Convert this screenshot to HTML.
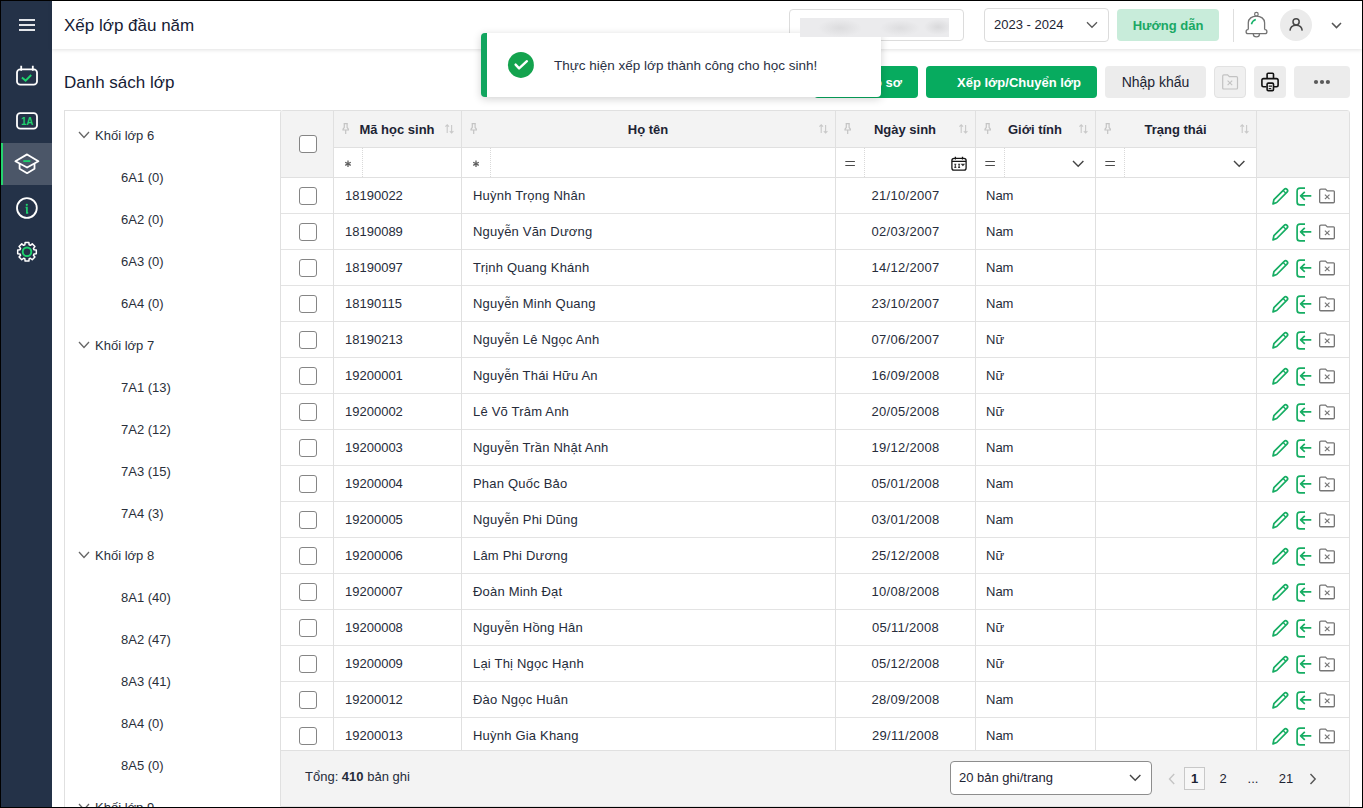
<!DOCTYPE html>
<html><head><meta charset="utf-8">
<style>
*{box-sizing:border-box;margin:0;padding:0}
html,body{width:1363px;height:808px;overflow:hidden;background:#000}
body{font-family:"Liberation Sans",sans-serif;color:#1d2433;position:relative}
#app{position:absolute;left:1px;top:1px;width:1361px;height:806px;background:#fff;overflow:hidden}
.abs{position:absolute}
svg{position:absolute;overflow:visible}
#side{position:absolute;left:0;top:0;width:51px;height:806px;background:#243248}
#hdr{position:absolute;left:51px;top:0;width:1310px;height:48px;background:#fff;box-shadow:0 1px 4px rgba(0,0,0,0.12);z-index:2}
.title{position:absolute;font-size:17px;color:#162035;white-space:nowrap}
.btn{position:absolute;top:65px;height:32px;border-radius:4px;font-size:13px;line-height:32px;text-align:center;white-space:nowrap}
.green{background:#07ab5f;color:#fff;font-weight:700;text-align:right;padding-right:16px}
.gray{background:#ececec;color:#1d2433}
#tree{position:absolute;left:63px;top:109px;width:217px;height:720px;border:1px solid #e0e0e0;border-right:none;background:#fff}
.tg{position:absolute;left:30px;font-size:13px;line-height:20px;color:#2a2f3a;white-space:nowrap}
.tg .chev{position:absolute;left:-17px;top:5px}
.tc{position:absolute;left:56px;font-size:13px;line-height:20px;color:#2a2f3a;white-space:nowrap}
#tbl{position:absolute;left:279px;top:109px;width:1070px;height:697px;border:1px solid #e0e0e0;border-radius:3px 3px 0 0;background:#fff;overflow:hidden}
.hd{position:absolute;background:#f3f3f3}
.row{position:absolute;left:0;width:1068px;height:36px;border-bottom:1px solid #e3e3e3;font-size:13px;line-height:36px;color:#262c3a}
.row span{position:absolute;white-space:nowrap}
.cb{position:absolute;width:18px;height:18px;border:1.5px solid #858585;border-radius:3px;background:#fff}
.row .cb{left:18px}
.c1{left:64px}.c2{left:192px;letter-spacing:0.2px}.c3{left:555px;width:139px;text-align:center;letter-spacing:0.3px}.c4{left:705px}
.ic{position:absolute;top:9px}
.vl{position:absolute;width:1px;background:#e0e0e0;top:0;height:639px;z-index:1}
.dl{position:absolute;width:0;border-left:1px dotted #d9d9d9;top:37px;height:29px}
.hdt{position:absolute;top:0;font-size:13px;font-weight:700;color:#1d2433;line-height:37px;white-space:nowrap;text-align:center}
.flt{position:absolute;top:37px;line-height:29px;font-size:13px;color:#666;font-weight:700}
#foot{position:absolute;left:0;top:639px;width:1068px;height:57px;background:#f3f3f3;border-top:1px solid #e0e0e0}
#toast{position:absolute;left:480px;top:32px;width:400px;height:64px;background:#fff;border-radius:4px;box-shadow:0 2px 8px rgba(0,0,0,0.18);z-index:5;border-left:6px solid #12a55f}
</style></head><body><div id="app">
<div id="side">
  <div class="abs" style="left:18px;top:18px;width:16px;height:2px;background:#e3e6ea"></div>
  <div class="abs" style="left:18px;top:23px;width:16px;height:2px;background:#e3e6ea"></div>
  <div class="abs" style="left:18px;top:28px;width:16px;height:2px;background:#e3e6ea"></div>
  <!-- calendar check -->
  <svg style="left:0;top:0" width="51" height="300">
    <rect x="16" y="68.3" width="20" height="15.4" rx="3.3" fill="none" stroke="#fff" stroke-width="1.8"/>
    <path d="M20.2 64.8 V69.8 M31.8 64.8 V69.8" stroke="#fff" stroke-width="1.8"/>
    <path d="M20.9 76.6 L24.6 79.6 L30.2 74" fill="none" stroke="#1ed36e" stroke-width="1.9"/>
    <rect x="16" y="112.2" width="20" height="15.5" rx="3.3" fill="none" stroke="#fff" stroke-width="1.8"/>
    <text x="20.2" y="124.2" textLength="12.2" lengthAdjust="spacingAndGlyphs" font-family="Liberation Sans" font-weight="700" font-size="11.6" fill="#1ed36e">1A</text>
  </svg>
  <div class="abs" style="left:0;top:142px;width:51px;height:42px;background:#4b5668"></div>
  <div class="abs" style="left:0;top:142px;width:2px;height:42px;background:#25d46f"></div>
  <svg style="left:0;top:0" width="51" height="300">
    <path d="M14.4 160.3 L26.1 153.4 L37.4 160.3 L26.1 166.5 Z" fill="none" stroke="#fff" stroke-width="1.8" stroke-linejoin="round"/>
    <path d="M18.6 162.4 V167.8 L26.1 172.2 L33.5 167.8 V162.4" fill="none" stroke="#fff" stroke-width="1.8" stroke-linejoin="round"/>
    <path d="M22.3 160.1 H29.3" stroke="#1ed36e" stroke-width="1.9"/>
    <circle cx="25.9" cy="207" r="9.9" fill="none" stroke="#fff" stroke-width="1.8"/>
    <circle cx="25.8" cy="203.8" r="1.1" fill="#1ed36e"/>
    <path d="M24.6 206.5 H25.9 V211.8 H27.2" fill="none" stroke="#1ed36e" stroke-width="1.7"/>
    <circle cx="26" cy="250.8" r="4.3" fill="none" stroke="#1ed36e" stroke-width="1.9"/>
    <path id="gear" d="M23.84 243.83 L24.11 241.49 L27.89 241.49 L28.16 243.83 L29.41 244.34 L31.25 242.88 L33.92 245.55 L32.46 247.39 L32.97 248.64 L35.31 248.91 L35.31 252.69 L32.97 252.96 L32.46 254.21 L33.92 256.05 L31.25 258.72 L29.41 257.26 L28.16 257.77 L27.89 260.11 L24.11 260.11 L23.84 257.77 L22.59 257.26 L20.75 258.72 L18.08 256.05 L19.54 254.21 L19.03 252.96 L16.69 252.69 L16.69 248.91 L19.03 248.64 L19.54 247.39 L18.08 245.55 L20.75 242.88 L22.59 244.34 Z" fill="none" stroke="#fff" stroke-width="1.5" stroke-linejoin="round"/>
  </svg>
</div>
<div id="hdr">
  <div class="title" style="left:12px;top:15px">Xếp lớp đầu năm</div>
  <div class="abs" style="left:737px;top:8px;width:175px;height:32px;border:1px solid #dcdcdc;border-radius:4px;background:#fff"></div>
  
  <div class="abs" style="left:932px;top:7px;width:125px;height:34px;border:1px solid #dcdcdc;border-radius:4px;background:#fff;font-size:13px;line-height:32px;padding-left:9px;color:#1d2433">2023 - 2024</div>
  <svg style="left:1034px;top:20px" width="12" height="8"><path d="M1 1.2 L6 6.3 L11 1.2" fill="none" stroke="#5a5a5a" stroke-width="1.3"/></svg>
  <div class="abs" style="left:1065px;top:8px;width:102px;height:32px;border-radius:4px;background:#c8ecda;color:#1aa864;font-weight:700;font-size:13px;line-height:33px;text-align:center">Hướng dẫn</div>
  <div class="abs" style="left:1181px;top:8px;width:1px;height:33px;background:#dedede"></div>
  <svg style="left:1192px;top:9px" width="26" height="30" viewBox="1244 10 26 30">
    <circle cx="1256.4" cy="14.2" r="1.8" fill="none" stroke="#737373" stroke-width="1.2"/>
    <path d="M1248.3 29.6 V22.8 C1248.3 18.6 1252 16.1 1256.4 16.1 C1260.8 16.1 1264.6 18.6 1264.6 22.8 V29.6" fill="none" stroke="#737373" stroke-width="1.3"/>
    <path d="M1248.3 29.6 H1248 Q1246.1 29.6 1246.1 31.65 Q1246.1 33.7 1248 33.7 H1265 Q1266.9 33.7 1266.9 31.65 Q1266.9 29.6 1265 29.6 H1264.6" fill="none" stroke="#737373" stroke-width="1.3"/>
    <path d="M1253.3 33.9 A3.1 2.9 0 0 0 1259.5 33.9" fill="none" stroke="#737373" stroke-width="1.3"/>
    <path d="M1251.4 24.3 Q1252.3 20.6 1255.8 19.5" fill="none" stroke="#17b26a" stroke-width="1.5"/>
  </svg>
  <div class="abs" style="left:1228px;top:8px;width:32px;height:32px;border-radius:50%;background:#ebebeb"></div>
  <svg style="left:1228px;top:8px" width="32" height="32" viewBox="1280 9 32 32">
    <circle cx="1296.1" cy="21.8" r="3.1" fill="none" stroke="#474747" stroke-width="1.5"/>
    <path d="M1290 30.6 Q1290.4 25.2 1296.1 25.2 Q1301.8 25.2 1302.2 30.6" fill="none" stroke="#474747" stroke-width="1.5"/>
  </svg>
  <svg style="left:1279px;top:21px" width="12" height="8"><path d="M1 1 L5.5 5.6 L10 1" fill="none" stroke="#555" stroke-width="1.5"/></svg>
</div>
<div class="title" style="left:63px;top:72px">Danh sách lớp</div>
<div class="btn green" style="left:813px;width:104px;overflow:hidden"><span style="position:absolute;right:16px;top:1px">Cập nhật hồ sơ</span></div>
<div class="btn green" style="left:925px;width:171px;line-height:33px">Xếp lớp/Chuyển lớp</div>
<div class="btn gray" style="left:1104px;width:101px;font-size:14px">Nhập khẩu</div>
<div class="btn" style="left:1213px;width:32px;background:#f0f0f0;border:1px solid #e2e2e2"></div>
<svg style="left:1221px;top:73px" width="17" height="16"><path d="M0.7 2 Q0.7 0.8 1.9 0.8 H5.6 L7.4 2.6 H14.4 Q15.5 2.6 15.5 3.7 V14 Q15.5 15 14.5 15 H1.7 Q0.7 15 0.7 14 Z" fill="none" stroke="#c2c2c2" stroke-width="1.2"/><path d="M5.6 6.6 L10.2 11.2 M10.2 6.6 L5.6 11.2" stroke="#c2c2c2" stroke-width="1.1"/></svg>
<div class="btn" style="left:1253px;width:32px;background:#ececec"></div>
<svg style="left:1258px;top:70px" width="22" height="22" viewBox="1259 71 22 22">
  <path d="M1267.1 78 V74.3 Q1267.1 73.3 1268.1 73.3 H1272.5 Q1273.5 73.3 1273.5 74.3 V78" fill="none" stroke="#111" stroke-width="1.6"/>
  <path d="M1266.5 86.7 H1263.6 Q1261.9 86.7 1261.9 85 V80.3 Q1261.9 78.6 1263.6 78.6 H1276.4 Q1278.1 78.6 1278.1 80.3 V85 Q1278.1 86.7 1276.4 86.7 H1274" fill="none" stroke="#111" stroke-width="1.6"/>
  <rect x="1267.1" y="83.1" width="6.4" height="7.5" rx="1.2" fill="#ececec" stroke="#111" stroke-width="1.6"/>
  <path d="M1268.7 86.1 H1272 M1268.7 88.5 H1271.2" stroke="#222" stroke-width="1.1"/>
</svg>
<div class="btn" style="left:1293px;width:56px;background:#ececec"></div>
<svg style="left:1311px;top:78px" width="24" height="6"><circle cx="4" cy="3" r="2.1" fill="#5a5a5a"/><circle cx="10" cy="3" r="2.1" fill="#5a5a5a"/><circle cx="15.9" cy="3" r="2.1" fill="#5a5a5a"/></svg>

<div class="abs" style="left:799px;top:17px;width:149px;height:19px;z-index:10;background:radial-gradient(ellipse 22px 9px at 40px 10px,#dcdcde,rgba(220,220,222,0)),radial-gradient(ellipse 20px 8px at 100px 10px,#dddddf,rgba(221,221,223,0)),radial-gradient(ellipse 14px 8px at 138px 9px,#d9d9db,rgba(217,217,219,0)),#ebebed"></div>
<div id="toast">
  <svg style="left:21px;top:19px" width="28" height="28"><circle cx="12.9" cy="12.9" r="13" fill="#14a34e"/><path d="M7.6 12.6 L11.1 16.4 L18.9 9.2" fill="none" stroke="#fff" stroke-width="2.4" stroke-linecap="round" stroke-linejoin="round"/></svg>
  <div class="abs" style="left:67px;top:25px;font-size:13.5px;color:#2a3144;white-space:nowrap">Thực hiện xếp lớp thành công cho học sinh!</div>
</div>

<div id="tree">
<div class="tg" style="top:15px"><svg class="chev" width="12" height="8" viewBox="0 0 12 8"><path d="M1 1 L6 6.5 L11 1" fill="none" stroke="#666" stroke-width="1.3"/></svg>Khối lớp 6</div>
<div class="tc" style="top:57px">6A1 (0)</div>
<div class="tc" style="top:99px">6A2 (0)</div>
<div class="tc" style="top:141px">6A3 (0)</div>
<div class="tc" style="top:183px">6A4 (0)</div>
<div class="tg" style="top:225px"><svg class="chev" width="12" height="8" viewBox="0 0 12 8"><path d="M1 1 L6 6.5 L11 1" fill="none" stroke="#666" stroke-width="1.3"/></svg>Khối lớp 7</div>
<div class="tc" style="top:267px">7A1 (13)</div>
<div class="tc" style="top:309px">7A2 (12)</div>
<div class="tc" style="top:351px">7A3 (15)</div>
<div class="tc" style="top:393px">7A4 (3)</div>
<div class="tg" style="top:435px"><svg class="chev" width="12" height="8" viewBox="0 0 12 8"><path d="M1 1 L6 6.5 L11 1" fill="none" stroke="#666" stroke-width="1.3"/></svg>Khối lớp 8</div>
<div class="tc" style="top:477px">8A1 (40)</div>
<div class="tc" style="top:519px">8A2 (47)</div>
<div class="tc" style="top:561px">8A3 (41)</div>
<div class="tc" style="top:603px">8A4 (0)</div>
<div class="tc" style="top:645px">8A5 (0)</div>
<div class="tg" style="top:687px"><svg class="chev" width="12" height="8" viewBox="0 0 12 8"><path d="M1 1 L6 6.5 L11 1" fill="none" stroke="#666" stroke-width="1.3"/></svg>Khối lớp 9</div>
</div>
<div id="tbl">
  <div class="hd" style="left:0;top:0;width:1068px;height:37px"></div>
  <div class="hd" style="left:0;top:0;width:52px;height:66px"></div>
  <div class="hd" style="left:975px;top:0;width:93px;height:66px"></div>
  <div class="abs" style="left:52px;top:36px;width:923px;height:1px;background:#e0e0e0"></div>
  <div class="abs" style="left:0;top:66px;width:1068px;height:1px;background:#e0e0e0"></div>
  <div class="vl" style="left:52px"></div>
  <div class="vl" style="left:180px"></div>
  <div class="vl" style="left:554px"></div>
  <div class="vl" style="left:694px"></div>
  <div class="vl" style="left:814px"></div>
  <div class="vl" style="left:975px"></div>
  <span class="cb" style="left:18px;top:24px"></span>
  <svg style="left:61px;top:12px" width="8" height="12"><path d="M1.6 0.7 H5.8 M2.3 0.7 V4.6 Q1 5.6 0.9 7 H6.5 Q6.4 5.6 5.1 4.6 V0.7 M3.7 7 V11" fill="none" stroke="#c4c4c4" stroke-width="1.2" stroke-linejoin="round"/></svg>
<div class="hdt" style="left:52px;width:128px">Mã học sinh</div>
<svg style="left:164px;top:13px" width="9" height="10"><path d="M2.2 9 V0.9 M0.4 2.7 L2.2 0.9 L4 2.7 M6.6 0.9 V9 M4.8 7.2 L6.6 9 L8.4 7.2" fill="none" stroke="#c9c9c9" stroke-width="1.1"/></svg>
<svg style="left:189px;top:12px" width="8" height="12"><path d="M1.6 0.7 H5.8 M2.3 0.7 V4.6 Q1 5.6 0.9 7 H6.5 Q6.4 5.6 5.1 4.6 V0.7 M3.7 7 V11" fill="none" stroke="#c4c4c4" stroke-width="1.2" stroke-linejoin="round"/></svg>
<div class="hdt" style="left:180px;width:374px">Họ tên</div>
<svg style="left:538px;top:13px" width="9" height="10"><path d="M2.2 9 V0.9 M0.4 2.7 L2.2 0.9 L4 2.7 M6.6 0.9 V9 M4.8 7.2 L6.6 9 L8.4 7.2" fill="none" stroke="#c9c9c9" stroke-width="1.1"/></svg>
<svg style="left:563px;top:12px" width="8" height="12"><path d="M1.6 0.7 H5.8 M2.3 0.7 V4.6 Q1 5.6 0.9 7 H6.5 Q6.4 5.6 5.1 4.6 V0.7 M3.7 7 V11" fill="none" stroke="#c4c4c4" stroke-width="1.2" stroke-linejoin="round"/></svg>
<div class="hdt" style="left:554px;width:140px">Ngày sinh</div>
<svg style="left:678px;top:13px" width="9" height="10"><path d="M2.2 9 V0.9 M0.4 2.7 L2.2 0.9 L4 2.7 M6.6 0.9 V9 M4.8 7.2 L6.6 9 L8.4 7.2" fill="none" stroke="#c9c9c9" stroke-width="1.1"/></svg>
<svg style="left:703px;top:12px" width="8" height="12"><path d="M1.6 0.7 H5.8 M2.3 0.7 V4.6 Q1 5.6 0.9 7 H6.5 Q6.4 5.6 5.1 4.6 V0.7 M3.7 7 V11" fill="none" stroke="#c4c4c4" stroke-width="1.2" stroke-linejoin="round"/></svg>
<div class="hdt" style="left:694px;width:120px">Giới tính</div>
<svg style="left:798px;top:13px" width="9" height="10"><path d="M2.2 9 V0.9 M0.4 2.7 L2.2 0.9 L4 2.7 M6.6 0.9 V9 M4.8 7.2 L6.6 9 L8.4 7.2" fill="none" stroke="#c9c9c9" stroke-width="1.1"/></svg>
<svg style="left:823px;top:12px" width="8" height="12"><path d="M1.6 0.7 H5.8 M2.3 0.7 V4.6 Q1 5.6 0.9 7 H6.5 Q6.4 5.6 5.1 4.6 V0.7 M3.7 7 V11" fill="none" stroke="#c4c4c4" stroke-width="1.2" stroke-linejoin="round"/></svg>
<div class="hdt" style="left:814px;width:161px">Trạng thái</div>
<svg style="left:959px;top:13px" width="9" height="10"><path d="M2.2 9 V0.9 M0.4 2.7 L2.2 0.9 L4 2.7 M6.6 0.9 V9 M4.8 7.2 L6.6 9 L8.4 7.2" fill="none" stroke="#c9c9c9" stroke-width="1.1"/></svg>
<svg style="left:63px;top:49px" width="8" height="8" viewBox="0 0 8 8"><path d="M4 0.6 V7 M1.2 2.2 L6.8 5.4 M6.8 2.2 L1.2 5.4" stroke="#606060" stroke-width="1.3"/></svg><div class="dl" style="left:81px"></div>
<svg style="left:191px;top:49px" width="8" height="8" viewBox="0 0 8 8"><path d="M4 0.6 V7 M1.2 2.2 L6.8 5.4 M6.8 2.2 L1.2 5.4" stroke="#606060" stroke-width="1.3"/></svg><div class="dl" style="left:209px"></div>
<svg style="left:564px;top:49px" width="12" height="7"><path d="M0.3 1.5 H9.9 M0.3 5.5 H9.9" stroke="#4a4a4a" stroke-width="1.1"/></svg><div class="dl" style="left:583px"></div>
<svg style="left:704px;top:49px" width="12" height="7"><path d="M0.3 1.5 H9.9 M0.3 5.5 H9.9" stroke="#4a4a4a" stroke-width="1.1"/></svg><div class="dl" style="left:723px"></div>
<svg style="left:824px;top:49px" width="12" height="7"><path d="M0.3 1.5 H9.9 M0.3 5.5 H9.9" stroke="#4a4a4a" stroke-width="1.1"/></svg><div class="dl" style="left:843px"></div>
<svg style="left:669px;top:45px" width="20" height="18" viewBox="950 156 20 18"><rect x="951.9" y="158.4" width="14.2" height="11.7" rx="2.2" fill="none" stroke="#151515" stroke-width="1.3"/><path d="M951.9 161.4 H966.1 M955.4 156.8 V159.6 M962.5 156.8 V159.6" stroke="#151515" stroke-width="1.3"/><path d="M954.3 164.3 H956.3 M955.3 164.3 V167.4 M954.3 167.4 H956.3 M958.1 164.3 H960.1 M959.1 164.3 V167.4 M958.1 167.4 H960.1 M961.8 164.2 H964 L962.9 165.5 Z" stroke="#333" stroke-width="1.1" fill="#333"/></svg>
<svg style="left:791px;top:49px" width="13" height="8"><path d="M1 1 L6.2 6.3 L11.4 1" fill="none" stroke="#444" stroke-width="1.4"/></svg>
<svg style="left:952px;top:49px" width="13" height="8"><path d="M1 1 L6.2 6.3 L11.4 1" fill="none" stroke="#444" stroke-width="1.4"/></svg>
<div class="row" style="top:67px"><span class="cb" style="top:9px"></span><span class="c1">18190022</span><span class="c2">Huỳnh Trọng Nhân</span><span class="c3">21/10/2007</span><span class="c4">Nam</span><svg class="ic" style="left:991px" width="18" height="19" viewBox="0 0 18 19"><path d="M1 16.9 L1.9 12.7 L12.2 2.4 Q13.6 1 15 2.4 Q16.4 3.8 15 5.2 L4.7 15.5 Z" fill="none" stroke="#16ad63" stroke-width="1.7" stroke-linejoin="round"/><path d="M11.2 3.6 L13.8 6.2" stroke="#16ad63" stroke-width="1.4"/></svg><svg class="ic" style="left:1015px" width="18" height="19" viewBox="0 0 18 19"><path d="M9 1.2 H4 Q1.1 1.2 1.1 4.2 V14.9 Q1.1 17.9 4 17.9 H9" fill="none" stroke="#16ad63" stroke-width="1.7"/><path d="M15.3 8.9 H4.6 M8.8 4.9 L4.6 8.9 L8.8 12.9" fill="none" stroke="#16ad63" stroke-width="1.7" stroke-linejoin="round"/></svg><svg class="ic" style="left:1038px" width="18" height="19" viewBox="0 0 18 19"><path d="M0.65 3.5 Q0.65 2.05 2 2.05 H6.5 L8.3 3.9 H14.5 Q15.35 3.9 15.35 4.8 V14.8 Q15.35 15.75 14.4 15.75 H1.6 Q0.65 15.75 0.65 14.8 Z" fill="none" stroke="#767676" stroke-width="1.3"/><path d="M5.9 7.6 L10.5 12.2 M10.5 7.6 L5.9 12.2" stroke="#767676" stroke-width="1.15"/></svg></div>
<div class="row" style="top:103px"><span class="cb" style="top:9px"></span><span class="c1">18190089</span><span class="c2">Nguyễn Văn Dương</span><span class="c3">02/03/2007</span><span class="c4">Nam</span><svg class="ic" style="left:991px" width="18" height="19" viewBox="0 0 18 19"><path d="M1 16.9 L1.9 12.7 L12.2 2.4 Q13.6 1 15 2.4 Q16.4 3.8 15 5.2 L4.7 15.5 Z" fill="none" stroke="#16ad63" stroke-width="1.7" stroke-linejoin="round"/><path d="M11.2 3.6 L13.8 6.2" stroke="#16ad63" stroke-width="1.4"/></svg><svg class="ic" style="left:1015px" width="18" height="19" viewBox="0 0 18 19"><path d="M9 1.2 H4 Q1.1 1.2 1.1 4.2 V14.9 Q1.1 17.9 4 17.9 H9" fill="none" stroke="#16ad63" stroke-width="1.7"/><path d="M15.3 8.9 H4.6 M8.8 4.9 L4.6 8.9 L8.8 12.9" fill="none" stroke="#16ad63" stroke-width="1.7" stroke-linejoin="round"/></svg><svg class="ic" style="left:1038px" width="18" height="19" viewBox="0 0 18 19"><path d="M0.65 3.5 Q0.65 2.05 2 2.05 H6.5 L8.3 3.9 H14.5 Q15.35 3.9 15.35 4.8 V14.8 Q15.35 15.75 14.4 15.75 H1.6 Q0.65 15.75 0.65 14.8 Z" fill="none" stroke="#767676" stroke-width="1.3"/><path d="M5.9 7.6 L10.5 12.2 M10.5 7.6 L5.9 12.2" stroke="#767676" stroke-width="1.15"/></svg></div>
<div class="row" style="top:139px"><span class="cb" style="top:9px"></span><span class="c1">18190097</span><span class="c2">Trịnh Quang Khánh</span><span class="c3">14/12/2007</span><span class="c4">Nam</span><svg class="ic" style="left:991px" width="18" height="19" viewBox="0 0 18 19"><path d="M1 16.9 L1.9 12.7 L12.2 2.4 Q13.6 1 15 2.4 Q16.4 3.8 15 5.2 L4.7 15.5 Z" fill="none" stroke="#16ad63" stroke-width="1.7" stroke-linejoin="round"/><path d="M11.2 3.6 L13.8 6.2" stroke="#16ad63" stroke-width="1.4"/></svg><svg class="ic" style="left:1015px" width="18" height="19" viewBox="0 0 18 19"><path d="M9 1.2 H4 Q1.1 1.2 1.1 4.2 V14.9 Q1.1 17.9 4 17.9 H9" fill="none" stroke="#16ad63" stroke-width="1.7"/><path d="M15.3 8.9 H4.6 M8.8 4.9 L4.6 8.9 L8.8 12.9" fill="none" stroke="#16ad63" stroke-width="1.7" stroke-linejoin="round"/></svg><svg class="ic" style="left:1038px" width="18" height="19" viewBox="0 0 18 19"><path d="M0.65 3.5 Q0.65 2.05 2 2.05 H6.5 L8.3 3.9 H14.5 Q15.35 3.9 15.35 4.8 V14.8 Q15.35 15.75 14.4 15.75 H1.6 Q0.65 15.75 0.65 14.8 Z" fill="none" stroke="#767676" stroke-width="1.3"/><path d="M5.9 7.6 L10.5 12.2 M10.5 7.6 L5.9 12.2" stroke="#767676" stroke-width="1.15"/></svg></div>
<div class="row" style="top:175px"><span class="cb" style="top:9px"></span><span class="c1">18190115</span><span class="c2">Nguyễn Minh Quang</span><span class="c3">23/10/2007</span><span class="c4">Nam</span><svg class="ic" style="left:991px" width="18" height="19" viewBox="0 0 18 19"><path d="M1 16.9 L1.9 12.7 L12.2 2.4 Q13.6 1 15 2.4 Q16.4 3.8 15 5.2 L4.7 15.5 Z" fill="none" stroke="#16ad63" stroke-width="1.7" stroke-linejoin="round"/><path d="M11.2 3.6 L13.8 6.2" stroke="#16ad63" stroke-width="1.4"/></svg><svg class="ic" style="left:1015px" width="18" height="19" viewBox="0 0 18 19"><path d="M9 1.2 H4 Q1.1 1.2 1.1 4.2 V14.9 Q1.1 17.9 4 17.9 H9" fill="none" stroke="#16ad63" stroke-width="1.7"/><path d="M15.3 8.9 H4.6 M8.8 4.9 L4.6 8.9 L8.8 12.9" fill="none" stroke="#16ad63" stroke-width="1.7" stroke-linejoin="round"/></svg><svg class="ic" style="left:1038px" width="18" height="19" viewBox="0 0 18 19"><path d="M0.65 3.5 Q0.65 2.05 2 2.05 H6.5 L8.3 3.9 H14.5 Q15.35 3.9 15.35 4.8 V14.8 Q15.35 15.75 14.4 15.75 H1.6 Q0.65 15.75 0.65 14.8 Z" fill="none" stroke="#767676" stroke-width="1.3"/><path d="M5.9 7.6 L10.5 12.2 M10.5 7.6 L5.9 12.2" stroke="#767676" stroke-width="1.15"/></svg></div>
<div class="row" style="top:211px"><span class="cb" style="top:9px"></span><span class="c1">18190213</span><span class="c2">Nguyễn Lê Ngọc Anh</span><span class="c3">07/06/2007</span><span class="c4">Nữ</span><svg class="ic" style="left:991px" width="18" height="19" viewBox="0 0 18 19"><path d="M1 16.9 L1.9 12.7 L12.2 2.4 Q13.6 1 15 2.4 Q16.4 3.8 15 5.2 L4.7 15.5 Z" fill="none" stroke="#16ad63" stroke-width="1.7" stroke-linejoin="round"/><path d="M11.2 3.6 L13.8 6.2" stroke="#16ad63" stroke-width="1.4"/></svg><svg class="ic" style="left:1015px" width="18" height="19" viewBox="0 0 18 19"><path d="M9 1.2 H4 Q1.1 1.2 1.1 4.2 V14.9 Q1.1 17.9 4 17.9 H9" fill="none" stroke="#16ad63" stroke-width="1.7"/><path d="M15.3 8.9 H4.6 M8.8 4.9 L4.6 8.9 L8.8 12.9" fill="none" stroke="#16ad63" stroke-width="1.7" stroke-linejoin="round"/></svg><svg class="ic" style="left:1038px" width="18" height="19" viewBox="0 0 18 19"><path d="M0.65 3.5 Q0.65 2.05 2 2.05 H6.5 L8.3 3.9 H14.5 Q15.35 3.9 15.35 4.8 V14.8 Q15.35 15.75 14.4 15.75 H1.6 Q0.65 15.75 0.65 14.8 Z" fill="none" stroke="#767676" stroke-width="1.3"/><path d="M5.9 7.6 L10.5 12.2 M10.5 7.6 L5.9 12.2" stroke="#767676" stroke-width="1.15"/></svg></div>
<div class="row" style="top:247px"><span class="cb" style="top:9px"></span><span class="c1">19200001</span><span class="c2">Nguyễn Thái Hữu An</span><span class="c3">16/09/2008</span><span class="c4">Nữ</span><svg class="ic" style="left:991px" width="18" height="19" viewBox="0 0 18 19"><path d="M1 16.9 L1.9 12.7 L12.2 2.4 Q13.6 1 15 2.4 Q16.4 3.8 15 5.2 L4.7 15.5 Z" fill="none" stroke="#16ad63" stroke-width="1.7" stroke-linejoin="round"/><path d="M11.2 3.6 L13.8 6.2" stroke="#16ad63" stroke-width="1.4"/></svg><svg class="ic" style="left:1015px" width="18" height="19" viewBox="0 0 18 19"><path d="M9 1.2 H4 Q1.1 1.2 1.1 4.2 V14.9 Q1.1 17.9 4 17.9 H9" fill="none" stroke="#16ad63" stroke-width="1.7"/><path d="M15.3 8.9 H4.6 M8.8 4.9 L4.6 8.9 L8.8 12.9" fill="none" stroke="#16ad63" stroke-width="1.7" stroke-linejoin="round"/></svg><svg class="ic" style="left:1038px" width="18" height="19" viewBox="0 0 18 19"><path d="M0.65 3.5 Q0.65 2.05 2 2.05 H6.5 L8.3 3.9 H14.5 Q15.35 3.9 15.35 4.8 V14.8 Q15.35 15.75 14.4 15.75 H1.6 Q0.65 15.75 0.65 14.8 Z" fill="none" stroke="#767676" stroke-width="1.3"/><path d="M5.9 7.6 L10.5 12.2 M10.5 7.6 L5.9 12.2" stroke="#767676" stroke-width="1.15"/></svg></div>
<div class="row" style="top:283px"><span class="cb" style="top:9px"></span><span class="c1">19200002</span><span class="c2">Lê Võ Trâm Anh</span><span class="c3">20/05/2008</span><span class="c4">Nữ</span><svg class="ic" style="left:991px" width="18" height="19" viewBox="0 0 18 19"><path d="M1 16.9 L1.9 12.7 L12.2 2.4 Q13.6 1 15 2.4 Q16.4 3.8 15 5.2 L4.7 15.5 Z" fill="none" stroke="#16ad63" stroke-width="1.7" stroke-linejoin="round"/><path d="M11.2 3.6 L13.8 6.2" stroke="#16ad63" stroke-width="1.4"/></svg><svg class="ic" style="left:1015px" width="18" height="19" viewBox="0 0 18 19"><path d="M9 1.2 H4 Q1.1 1.2 1.1 4.2 V14.9 Q1.1 17.9 4 17.9 H9" fill="none" stroke="#16ad63" stroke-width="1.7"/><path d="M15.3 8.9 H4.6 M8.8 4.9 L4.6 8.9 L8.8 12.9" fill="none" stroke="#16ad63" stroke-width="1.7" stroke-linejoin="round"/></svg><svg class="ic" style="left:1038px" width="18" height="19" viewBox="0 0 18 19"><path d="M0.65 3.5 Q0.65 2.05 2 2.05 H6.5 L8.3 3.9 H14.5 Q15.35 3.9 15.35 4.8 V14.8 Q15.35 15.75 14.4 15.75 H1.6 Q0.65 15.75 0.65 14.8 Z" fill="none" stroke="#767676" stroke-width="1.3"/><path d="M5.9 7.6 L10.5 12.2 M10.5 7.6 L5.9 12.2" stroke="#767676" stroke-width="1.15"/></svg></div>
<div class="row" style="top:319px"><span class="cb" style="top:9px"></span><span class="c1">19200003</span><span class="c2">Nguyễn Trần Nhật Anh</span><span class="c3">19/12/2008</span><span class="c4">Nam</span><svg class="ic" style="left:991px" width="18" height="19" viewBox="0 0 18 19"><path d="M1 16.9 L1.9 12.7 L12.2 2.4 Q13.6 1 15 2.4 Q16.4 3.8 15 5.2 L4.7 15.5 Z" fill="none" stroke="#16ad63" stroke-width="1.7" stroke-linejoin="round"/><path d="M11.2 3.6 L13.8 6.2" stroke="#16ad63" stroke-width="1.4"/></svg><svg class="ic" style="left:1015px" width="18" height="19" viewBox="0 0 18 19"><path d="M9 1.2 H4 Q1.1 1.2 1.1 4.2 V14.9 Q1.1 17.9 4 17.9 H9" fill="none" stroke="#16ad63" stroke-width="1.7"/><path d="M15.3 8.9 H4.6 M8.8 4.9 L4.6 8.9 L8.8 12.9" fill="none" stroke="#16ad63" stroke-width="1.7" stroke-linejoin="round"/></svg><svg class="ic" style="left:1038px" width="18" height="19" viewBox="0 0 18 19"><path d="M0.65 3.5 Q0.65 2.05 2 2.05 H6.5 L8.3 3.9 H14.5 Q15.35 3.9 15.35 4.8 V14.8 Q15.35 15.75 14.4 15.75 H1.6 Q0.65 15.75 0.65 14.8 Z" fill="none" stroke="#767676" stroke-width="1.3"/><path d="M5.9 7.6 L10.5 12.2 M10.5 7.6 L5.9 12.2" stroke="#767676" stroke-width="1.15"/></svg></div>
<div class="row" style="top:355px"><span class="cb" style="top:9px"></span><span class="c1">19200004</span><span class="c2">Phan Quốc Bảo</span><span class="c3">05/01/2008</span><span class="c4">Nam</span><svg class="ic" style="left:991px" width="18" height="19" viewBox="0 0 18 19"><path d="M1 16.9 L1.9 12.7 L12.2 2.4 Q13.6 1 15 2.4 Q16.4 3.8 15 5.2 L4.7 15.5 Z" fill="none" stroke="#16ad63" stroke-width="1.7" stroke-linejoin="round"/><path d="M11.2 3.6 L13.8 6.2" stroke="#16ad63" stroke-width="1.4"/></svg><svg class="ic" style="left:1015px" width="18" height="19" viewBox="0 0 18 19"><path d="M9 1.2 H4 Q1.1 1.2 1.1 4.2 V14.9 Q1.1 17.9 4 17.9 H9" fill="none" stroke="#16ad63" stroke-width="1.7"/><path d="M15.3 8.9 H4.6 M8.8 4.9 L4.6 8.9 L8.8 12.9" fill="none" stroke="#16ad63" stroke-width="1.7" stroke-linejoin="round"/></svg><svg class="ic" style="left:1038px" width="18" height="19" viewBox="0 0 18 19"><path d="M0.65 3.5 Q0.65 2.05 2 2.05 H6.5 L8.3 3.9 H14.5 Q15.35 3.9 15.35 4.8 V14.8 Q15.35 15.75 14.4 15.75 H1.6 Q0.65 15.75 0.65 14.8 Z" fill="none" stroke="#767676" stroke-width="1.3"/><path d="M5.9 7.6 L10.5 12.2 M10.5 7.6 L5.9 12.2" stroke="#767676" stroke-width="1.15"/></svg></div>
<div class="row" style="top:391px"><span class="cb" style="top:9px"></span><span class="c1">19200005</span><span class="c2">Nguyễn Phi Dũng</span><span class="c3">03/01/2008</span><span class="c4">Nam</span><svg class="ic" style="left:991px" width="18" height="19" viewBox="0 0 18 19"><path d="M1 16.9 L1.9 12.7 L12.2 2.4 Q13.6 1 15 2.4 Q16.4 3.8 15 5.2 L4.7 15.5 Z" fill="none" stroke="#16ad63" stroke-width="1.7" stroke-linejoin="round"/><path d="M11.2 3.6 L13.8 6.2" stroke="#16ad63" stroke-width="1.4"/></svg><svg class="ic" style="left:1015px" width="18" height="19" viewBox="0 0 18 19"><path d="M9 1.2 H4 Q1.1 1.2 1.1 4.2 V14.9 Q1.1 17.9 4 17.9 H9" fill="none" stroke="#16ad63" stroke-width="1.7"/><path d="M15.3 8.9 H4.6 M8.8 4.9 L4.6 8.9 L8.8 12.9" fill="none" stroke="#16ad63" stroke-width="1.7" stroke-linejoin="round"/></svg><svg class="ic" style="left:1038px" width="18" height="19" viewBox="0 0 18 19"><path d="M0.65 3.5 Q0.65 2.05 2 2.05 H6.5 L8.3 3.9 H14.5 Q15.35 3.9 15.35 4.8 V14.8 Q15.35 15.75 14.4 15.75 H1.6 Q0.65 15.75 0.65 14.8 Z" fill="none" stroke="#767676" stroke-width="1.3"/><path d="M5.9 7.6 L10.5 12.2 M10.5 7.6 L5.9 12.2" stroke="#767676" stroke-width="1.15"/></svg></div>
<div class="row" style="top:427px"><span class="cb" style="top:9px"></span><span class="c1">19200006</span><span class="c2">Lâm Phi Dương</span><span class="c3">25/12/2008</span><span class="c4">Nữ</span><svg class="ic" style="left:991px" width="18" height="19" viewBox="0 0 18 19"><path d="M1 16.9 L1.9 12.7 L12.2 2.4 Q13.6 1 15 2.4 Q16.4 3.8 15 5.2 L4.7 15.5 Z" fill="none" stroke="#16ad63" stroke-width="1.7" stroke-linejoin="round"/><path d="M11.2 3.6 L13.8 6.2" stroke="#16ad63" stroke-width="1.4"/></svg><svg class="ic" style="left:1015px" width="18" height="19" viewBox="0 0 18 19"><path d="M9 1.2 H4 Q1.1 1.2 1.1 4.2 V14.9 Q1.1 17.9 4 17.9 H9" fill="none" stroke="#16ad63" stroke-width="1.7"/><path d="M15.3 8.9 H4.6 M8.8 4.9 L4.6 8.9 L8.8 12.9" fill="none" stroke="#16ad63" stroke-width="1.7" stroke-linejoin="round"/></svg><svg class="ic" style="left:1038px" width="18" height="19" viewBox="0 0 18 19"><path d="M0.65 3.5 Q0.65 2.05 2 2.05 H6.5 L8.3 3.9 H14.5 Q15.35 3.9 15.35 4.8 V14.8 Q15.35 15.75 14.4 15.75 H1.6 Q0.65 15.75 0.65 14.8 Z" fill="none" stroke="#767676" stroke-width="1.3"/><path d="M5.9 7.6 L10.5 12.2 M10.5 7.6 L5.9 12.2" stroke="#767676" stroke-width="1.15"/></svg></div>
<div class="row" style="top:463px"><span class="cb" style="top:9px"></span><span class="c1">19200007</span><span class="c2">Đoàn Minh Đạt</span><span class="c3">10/08/2008</span><span class="c4">Nam</span><svg class="ic" style="left:991px" width="18" height="19" viewBox="0 0 18 19"><path d="M1 16.9 L1.9 12.7 L12.2 2.4 Q13.6 1 15 2.4 Q16.4 3.8 15 5.2 L4.7 15.5 Z" fill="none" stroke="#16ad63" stroke-width="1.7" stroke-linejoin="round"/><path d="M11.2 3.6 L13.8 6.2" stroke="#16ad63" stroke-width="1.4"/></svg><svg class="ic" style="left:1015px" width="18" height="19" viewBox="0 0 18 19"><path d="M9 1.2 H4 Q1.1 1.2 1.1 4.2 V14.9 Q1.1 17.9 4 17.9 H9" fill="none" stroke="#16ad63" stroke-width="1.7"/><path d="M15.3 8.9 H4.6 M8.8 4.9 L4.6 8.9 L8.8 12.9" fill="none" stroke="#16ad63" stroke-width="1.7" stroke-linejoin="round"/></svg><svg class="ic" style="left:1038px" width="18" height="19" viewBox="0 0 18 19"><path d="M0.65 3.5 Q0.65 2.05 2 2.05 H6.5 L8.3 3.9 H14.5 Q15.35 3.9 15.35 4.8 V14.8 Q15.35 15.75 14.4 15.75 H1.6 Q0.65 15.75 0.65 14.8 Z" fill="none" stroke="#767676" stroke-width="1.3"/><path d="M5.9 7.6 L10.5 12.2 M10.5 7.6 L5.9 12.2" stroke="#767676" stroke-width="1.15"/></svg></div>
<div class="row" style="top:499px"><span class="cb" style="top:9px"></span><span class="c1">19200008</span><span class="c2">Nguyễn Hồng Hân</span><span class="c3">05/11/2008</span><span class="c4">Nữ</span><svg class="ic" style="left:991px" width="18" height="19" viewBox="0 0 18 19"><path d="M1 16.9 L1.9 12.7 L12.2 2.4 Q13.6 1 15 2.4 Q16.4 3.8 15 5.2 L4.7 15.5 Z" fill="none" stroke="#16ad63" stroke-width="1.7" stroke-linejoin="round"/><path d="M11.2 3.6 L13.8 6.2" stroke="#16ad63" stroke-width="1.4"/></svg><svg class="ic" style="left:1015px" width="18" height="19" viewBox="0 0 18 19"><path d="M9 1.2 H4 Q1.1 1.2 1.1 4.2 V14.9 Q1.1 17.9 4 17.9 H9" fill="none" stroke="#16ad63" stroke-width="1.7"/><path d="M15.3 8.9 H4.6 M8.8 4.9 L4.6 8.9 L8.8 12.9" fill="none" stroke="#16ad63" stroke-width="1.7" stroke-linejoin="round"/></svg><svg class="ic" style="left:1038px" width="18" height="19" viewBox="0 0 18 19"><path d="M0.65 3.5 Q0.65 2.05 2 2.05 H6.5 L8.3 3.9 H14.5 Q15.35 3.9 15.35 4.8 V14.8 Q15.35 15.75 14.4 15.75 H1.6 Q0.65 15.75 0.65 14.8 Z" fill="none" stroke="#767676" stroke-width="1.3"/><path d="M5.9 7.6 L10.5 12.2 M10.5 7.6 L5.9 12.2" stroke="#767676" stroke-width="1.15"/></svg></div>
<div class="row" style="top:535px"><span class="cb" style="top:9px"></span><span class="c1">19200009</span><span class="c2">Lại Thị Ngọc Hạnh</span><span class="c3">05/12/2008</span><span class="c4">Nữ</span><svg class="ic" style="left:991px" width="18" height="19" viewBox="0 0 18 19"><path d="M1 16.9 L1.9 12.7 L12.2 2.4 Q13.6 1 15 2.4 Q16.4 3.8 15 5.2 L4.7 15.5 Z" fill="none" stroke="#16ad63" stroke-width="1.7" stroke-linejoin="round"/><path d="M11.2 3.6 L13.8 6.2" stroke="#16ad63" stroke-width="1.4"/></svg><svg class="ic" style="left:1015px" width="18" height="19" viewBox="0 0 18 19"><path d="M9 1.2 H4 Q1.1 1.2 1.1 4.2 V14.9 Q1.1 17.9 4 17.9 H9" fill="none" stroke="#16ad63" stroke-width="1.7"/><path d="M15.3 8.9 H4.6 M8.8 4.9 L4.6 8.9 L8.8 12.9" fill="none" stroke="#16ad63" stroke-width="1.7" stroke-linejoin="round"/></svg><svg class="ic" style="left:1038px" width="18" height="19" viewBox="0 0 18 19"><path d="M0.65 3.5 Q0.65 2.05 2 2.05 H6.5 L8.3 3.9 H14.5 Q15.35 3.9 15.35 4.8 V14.8 Q15.35 15.75 14.4 15.75 H1.6 Q0.65 15.75 0.65 14.8 Z" fill="none" stroke="#767676" stroke-width="1.3"/><path d="M5.9 7.6 L10.5 12.2 M10.5 7.6 L5.9 12.2" stroke="#767676" stroke-width="1.15"/></svg></div>
<div class="row" style="top:571px"><span class="cb" style="top:9px"></span><span class="c1">19200012</span><span class="c2">Đào Ngọc Huân</span><span class="c3">28/09/2008</span><span class="c4">Nam</span><svg class="ic" style="left:991px" width="18" height="19" viewBox="0 0 18 19"><path d="M1 16.9 L1.9 12.7 L12.2 2.4 Q13.6 1 15 2.4 Q16.4 3.8 15 5.2 L4.7 15.5 Z" fill="none" stroke="#16ad63" stroke-width="1.7" stroke-linejoin="round"/><path d="M11.2 3.6 L13.8 6.2" stroke="#16ad63" stroke-width="1.4"/></svg><svg class="ic" style="left:1015px" width="18" height="19" viewBox="0 0 18 19"><path d="M9 1.2 H4 Q1.1 1.2 1.1 4.2 V14.9 Q1.1 17.9 4 17.9 H9" fill="none" stroke="#16ad63" stroke-width="1.7"/><path d="M15.3 8.9 H4.6 M8.8 4.9 L4.6 8.9 L8.8 12.9" fill="none" stroke="#16ad63" stroke-width="1.7" stroke-linejoin="round"/></svg><svg class="ic" style="left:1038px" width="18" height="19" viewBox="0 0 18 19"><path d="M0.65 3.5 Q0.65 2.05 2 2.05 H6.5 L8.3 3.9 H14.5 Q15.35 3.9 15.35 4.8 V14.8 Q15.35 15.75 14.4 15.75 H1.6 Q0.65 15.75 0.65 14.8 Z" fill="none" stroke="#767676" stroke-width="1.3"/><path d="M5.9 7.6 L10.5 12.2 M10.5 7.6 L5.9 12.2" stroke="#767676" stroke-width="1.15"/></svg></div>
<div class="row" style="top:607px"><span class="cb" style="top:9px"></span><span class="c1">19200013</span><span class="c2">Huỳnh Gia Khang</span><span class="c3">29/11/2008</span><span class="c4">Nam</span><svg class="ic" style="left:991px" width="18" height="19" viewBox="0 0 18 19"><path d="M1 16.9 L1.9 12.7 L12.2 2.4 Q13.6 1 15 2.4 Q16.4 3.8 15 5.2 L4.7 15.5 Z" fill="none" stroke="#16ad63" stroke-width="1.7" stroke-linejoin="round"/><path d="M11.2 3.6 L13.8 6.2" stroke="#16ad63" stroke-width="1.4"/></svg><svg class="ic" style="left:1015px" width="18" height="19" viewBox="0 0 18 19"><path d="M9 1.2 H4 Q1.1 1.2 1.1 4.2 V14.9 Q1.1 17.9 4 17.9 H9" fill="none" stroke="#16ad63" stroke-width="1.7"/><path d="M15.3 8.9 H4.6 M8.8 4.9 L4.6 8.9 L8.8 12.9" fill="none" stroke="#16ad63" stroke-width="1.7" stroke-linejoin="round"/></svg><svg class="ic" style="left:1038px" width="18" height="19" viewBox="0 0 18 19"><path d="M0.65 3.5 Q0.65 2.05 2 2.05 H6.5 L8.3 3.9 H14.5 Q15.35 3.9 15.35 4.8 V14.8 Q15.35 15.75 14.4 15.75 H1.6 Q0.65 15.75 0.65 14.8 Z" fill="none" stroke="#767676" stroke-width="1.3"/><path d="M5.9 7.6 L10.5 12.2 M10.5 7.6 L5.9 12.2" stroke="#767676" stroke-width="1.15"/></svg></div>
  <div id="foot">
    <div class="abs" style="left:24px;top:18px;font-size:13px;color:#262c3a;white-space:nowrap">Tổng: <b>410</b> bản ghi</div>
    <div class="abs" style="left:669px;top:10px;width:202px;height:34px;border:1px solid #8d8d8d;border-radius:4px;background:#fff;font-size:13px;line-height:32px;padding-left:8px;color:#1d2433;white-space:nowrap">20 bản ghi/trang</div>
    <svg style="left:848px;top:23px" width="13" height="8"><path d="M1 1 L6.2 6.3 L11.4 1" fill="none" stroke="#444" stroke-width="1.4"/></svg>
    <svg style="left:887px;top:22px" width="8" height="12"><path d="M6.2 1 L1.5 6 L6.2 11" fill="none" stroke="#c4c4c4" stroke-width="1.4"/></svg>
    <div class="abs" style="left:903px;top:16px;width:21px;height:23px;border:1px solid #c8c8c8;background:#f7f7f7;font-size:13px;font-weight:700;line-height:21px;text-align:center">1</div>
    <div class="abs" style="left:932px;top:16px;width:20px;font-size:13px;line-height:23px;text-align:center">2</div>
    <div class="abs" style="left:962px;top:16px;width:20px;font-size:13px;line-height:23px;text-align:center">...</div>
    <div class="abs" style="left:992px;top:16px;width:26px;font-size:13px;line-height:23px;text-align:center">21</div>
    <svg style="left:1028px;top:22px" width="8" height="12"><path d="M1.5 1 L6.2 6 L1.5 11" fill="none" stroke="#555" stroke-width="1.4"/></svg>
  </div>
</div>
</div></body></html>
